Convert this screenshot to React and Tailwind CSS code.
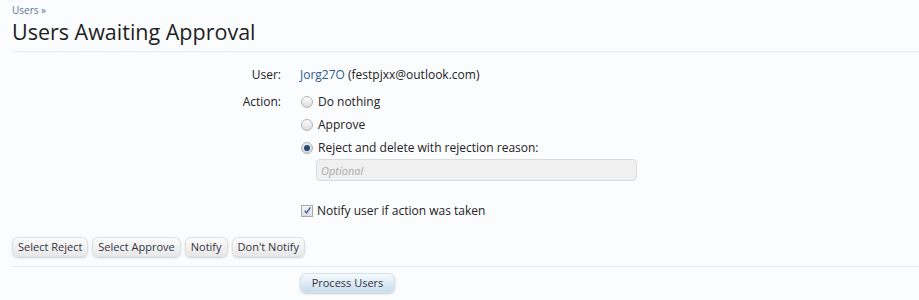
import { useState } from 'react';

// Admin-style "users awaiting approval" form.
const font = { fontFamily: '"Open Sans", "Liberation Sans", sans-serif' };

function Radio({ checked, onChange, children }) {
  return (
    <label className="flex items-center gap-[5px] cursor-pointer">
      <span
        onClick={onChange}
        className={`w-[12px] h-[12px] rounded-full border border-[#b5b5b5] flex items-center justify-center ${checked ? 'bg-gradient-to-b from-[#e6eef6] to-[#c9d6e3]' : 'bg-gradient-to-b from-[#fdfdfd] to-[#dcdcdc]'}`}
      >
        {checked && <span className="w-[6px] h-[6px] rounded-full bg-[#2b4a6b]" />}
      </span>
      <span>{children}</span>
    </label>
  );
}

function Btn({ children }) {
  return (
    <button
      type="button"
      className="h-[20px] px-[5px] rounded-[6px] border border-[#e0e0e0] bg-gradient-to-b from-[#fbfbfb] to-[#e8e8ea] text-[11px] text-[#333340] shadow-[0_1px_2px_rgba(0,0,0,0.18)]"
    >
      {children}
    </button>
  );
}

export default function App() {
  const [action, setAction] = useState('reject');
  const [notify, setNotify] = useState(true);

  return (
    <div className="w-[919px] h-[300px] bg-[#fbfcfe] text-[#222] overflow-hidden" style={font}>
      <div className="px-[12px] pt-[3px]">
        <div className="text-[10px] text-[#5d7390] leading-[14px]">Users &raquo;</div>
        <h1 className="text-[21.5px] leading-[28px] mt-[1px] text-[#1e1e1e]">Users Awaiting Approval</h1>
      </div>
      <div className="ml-[12px] mt-[5px] h-px bg-[#e3ebf3]" />

      <div className="text-[12px] leading-[17px] mt-[14px]">
        <div className="flex">
          <div className="w-[281px] text-right">User:</div>
          <div className="pl-[19px]">
            <a className="text-[#2f5b8c]">Jorg27O</a> (festpjxx@outlook.com)
          </div>
        </div>

        <div className="flex mt-[10px]">
          <div className="w-[281px] text-right">Action:</div>
          <div className="pl-[20px] flex flex-col gap-[6px]">
            <Radio checked={action === 'none'} onChange={() => setAction('none')}>Do nothing</Radio>
            <Radio checked={action === 'approve'} onChange={() => setAction('approve')}>Approve</Radio>
            <Radio checked={action === 'reject'} onChange={() => setAction('reject')}>Reject and delete with rejection reason:</Radio>
            <input
              placeholder="Optional"
              className="ml-[15px] -mt-[3px] w-[321px] h-[22px] rounded-[4px] border border-[#dcdcdc] bg-[#f0f0f0] px-[4px] text-[11px] italic placeholder:text-[#aaa] outline-none"
            />
            <label className="flex items-center gap-[4px] mt-[15px] cursor-pointer">
              <span
                onClick={() => setNotify(n => !n)}
                className="w-[12px] h-[12px] border border-[#a9a9a9] bg-gradient-to-b from-[#f6f6f6] to-[#dedede] flex items-center justify-center"
              >
                {notify && (
                  <svg viewBox="0 0 10 10" className="w-[9px] h-[9px]">
                    <path d="M2 5.2 L4 7.6 L8.2 1.6" fill="none" stroke="#3a57a8" strokeWidth="1.6" />
                  </svg>
                )}
              </span>
              <span>Notify user if action was taken</span>
            </label>
          </div>
        </div>
      </div>

      <div className="px-[12px] mt-[18px] flex gap-[4px]">
        <Btn>Select Reject</Btn>
        <Btn>Select Approve</Btn>
        <Btn>Notify</Btn>
        <Btn>Don't Notify</Btn>
      </div>
      <div className="ml-[12px] mt-[9px] h-px bg-[#e3ebf3]" />
      <div className="pl-[300px] mt-[6px] flex">
        <button
          type="button"
          className="h-[20px] w-[95px] rounded-[6px] border border-[#d3e2ee] bg-gradient-to-b from-[#f6fafd] to-[#c8dded] text-[11px] text-[#333340] shadow-[0_1px_2px_rgba(0,0,0,0.2)]"
        >
          Process Users
        </button>
      </div>
    </div>
  );
}
